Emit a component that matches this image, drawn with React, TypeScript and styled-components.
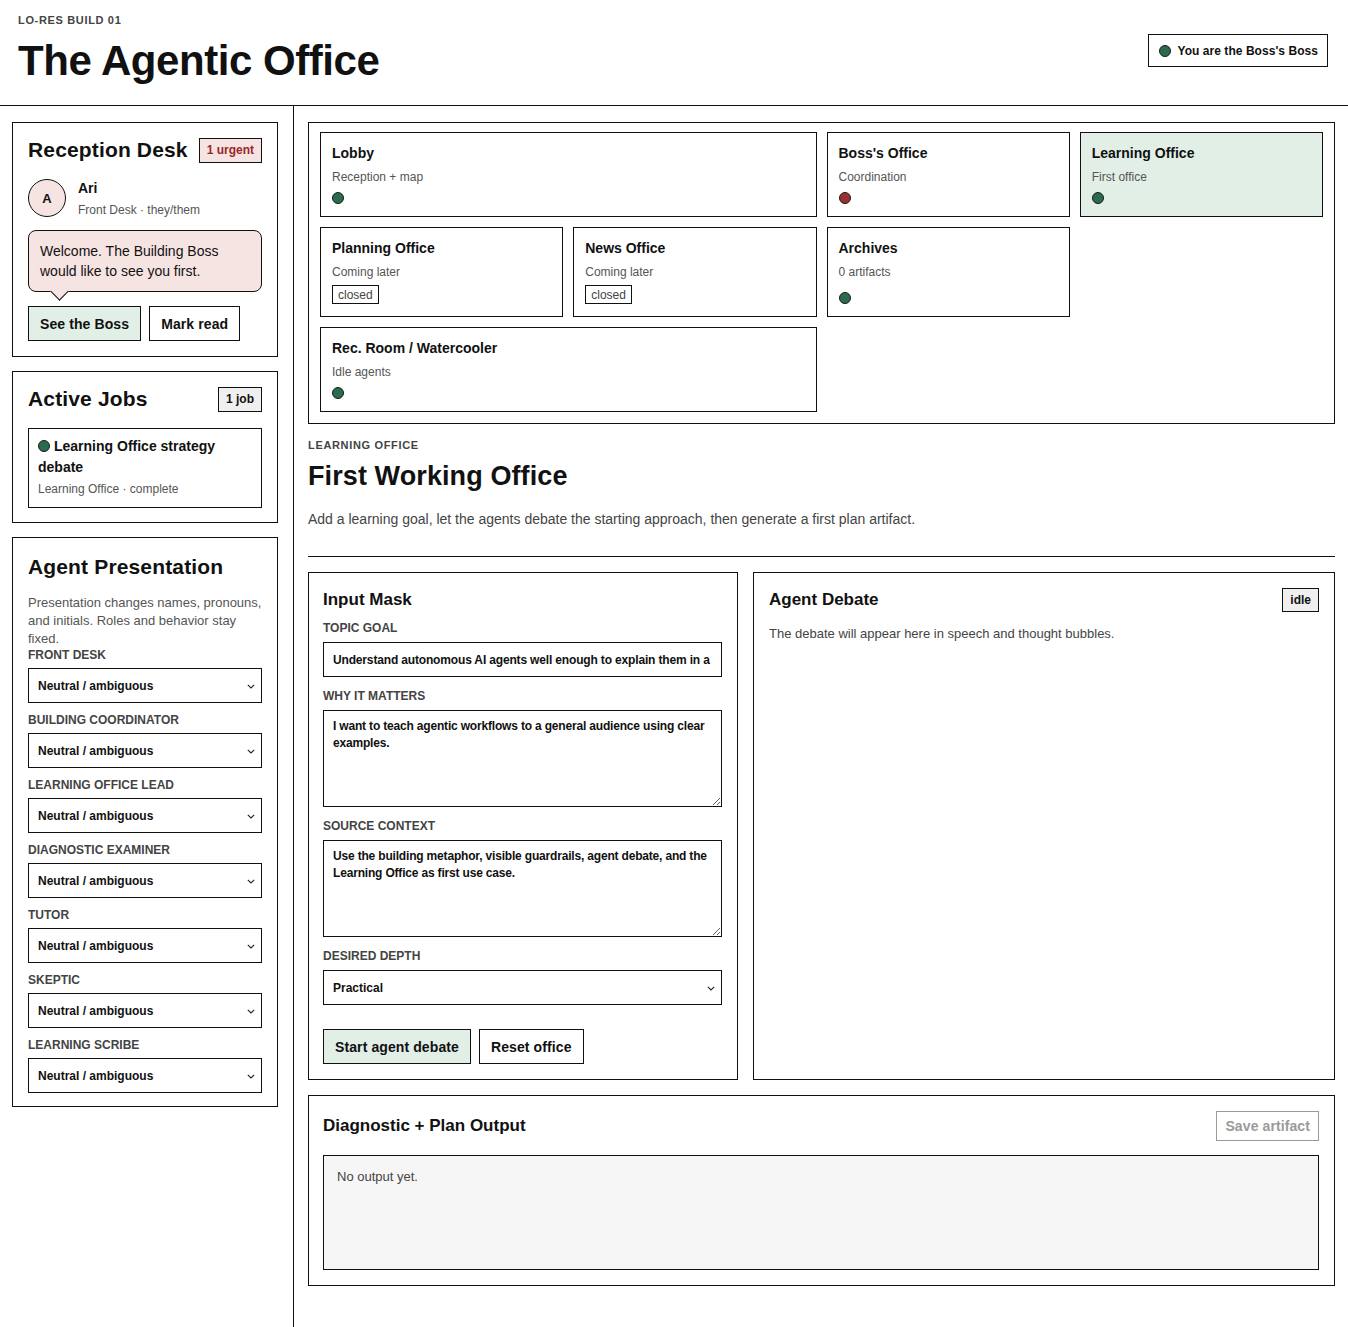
import styled, { createGlobalStyle } from 'styled-components';

import type { FunctionComponent } from 'react';

type Status = 'ok' | 'alert' | 'closed';

type RoomProps = Readonly<{
  title: string;
  sub: string;
  status: Status;
  span?: number;
  active?: boolean;
}>;

const ink = '#111';
const green = '#2b6b4f';
const red = '#9c3030';
const mint = '#e1efe7';
const blush = '#f6e4e3';

const GlobalStyle = createGlobalStyle`
  * { box-sizing: border-box; }

  body {
    margin: 0;
    background: #fff;
    color: ${ink};
    font-family: "Liberation Sans", Arial, Helvetica, sans-serif;
  }

  button, input, select, textarea {
    font-family: inherit;
    color: ${ink};
  }
`;

const Page = styled.div`
  min-height: 100vh;
  display: flex;
  flex-direction: column;
`;

const Header = styled.header`
  display: flex;
  align-items: center;
  justify-content: space-between;
  padding: 14px 20px 20px 18px;
  border-bottom: 1px solid ${ink};
`;

const Kicker = styled.div`
  font-size: 11px;
  line-height: 13px;
  font-weight: 700;
  letter-spacing: 0.06em;
  color: #444;
  text-transform: uppercase;
`;

const AppTitle = styled.h1`
  margin: 10px 0 0;
  font-size: 42px;
  line-height: 48px;
  letter-spacing: -0.45px;
  font-weight: 700;
`;

const RoleBadge = styled.div`
  display: flex;
  align-items: center;
  gap: 7px;
  height: 33px;
  margin-top: 2px;
  padding: 0 9px 0 10px;
  border: 1px solid ${ink};
  font-size: 12px;
  font-weight: 700;
  letter-spacing: 0.05px;
`;

const Dot = styled.span<{ $tone: 'ok' | 'alert' }>`
  display: inline-block;
  flex: none;
  width: 12px;
  height: 12px;
  border-radius: 50%;
  border: 1px solid #1a1a1a;
  background: ${({ $tone }) => ($tone === 'ok' ? green : red)};
`;

const Body = styled.div`
  flex: 1;
  display: grid;
  grid-template-columns: 294px 1fr;
`;

const Sidebar = styled.aside`
  display: flex;
  flex-direction: column;
  gap: 14px;
  padding: 16px 15px 20px 12px;
  border-right: 1px solid ${ink};
`;

const Panel = styled.section<{ $bottom?: number }>`
  border: 1px solid ${ink};
  padding: 14px 15px ${({ $bottom }) => $bottom ?? 15}px;
`;

const PanelHead = styled.div<{ $gap?: number; $top?: number }>`
  display: flex;
  align-items: center;
  justify-content: space-between;
  min-height: 26px;
  margin-top: ${({ $top }) => $top ?? 0}px;
  margin-bottom: ${({ $gap }) => $gap ?? 16}px;
`;

const PanelTitle = styled.h2`
  margin: 0;
  font-size: 21px;
  line-height: 26px;
  letter-spacing: 0.15px;
  font-weight: 700;
`;

const Tag = styled.span<{ $tone?: 'urgent' | 'plain' }>`
  display: inline-flex;
  align-items: center;
  height: 25px;
  padding: 0 7px;
  border: 1px solid ${ink};
  font-size: 12px;
  font-weight: 700;
  background: ${({ $tone }) => ($tone === 'urgent' ? blush : '#efefef')};
  color: ${({ $tone }) => ($tone === 'urgent' ? '#9a2727' : ink)};
`;

const AgentRow = styled.div`
  display: flex;
  gap: 12px;
  align-items: flex-start;
`;

const Avatar = styled.div`
  width: 38px;
  height: 38px;
  border-radius: 50%;
  border: 1px solid ${ink};
  background: ${blush};
  display: flex;
  align-items: center;
  justify-content: center;
  font-size: 13px;
  font-weight: 700;
`;

const AgentText = styled.div`
  padding-top: 1px;
`;

const AgentName = styled.div`
  font-size: 14px;
  line-height: 17px;
  font-weight: 700;
`;

const Meta = styled.div`
  font-size: 12px;
  line-height: 15px;
  color: #555;
`;

const AgentMeta = styled(Meta)`
  margin-top: 6px;
`;

const Bubble = styled.div`
  position: relative;
  margin-top: 12px;
  padding: 10px 11px;
  border: 1px solid ${ink};
  border-radius: 8px;
  background: ${blush};
  font-size: 14px;
  line-height: 20px;

  &::after {
    content: '';
    position: absolute;
    left: 24px;
    bottom: -7px;
    width: 12px;
    height: 12px;
    background: ${blush};
    border-right: 1px solid ${ink};
    border-bottom: 1px solid ${ink};
    transform: rotate(45deg);
  }
`;

const ButtonRow = styled.div<{ $top: number }>`
  display: flex;
  gap: 8px;
  margin-top: ${({ $top }) => $top}px;
`;

const Button = styled.button<{ $primary?: boolean }>`
  height: 35px;
  padding: 0 11px;
  border: 1px solid ${({ disabled }) => (disabled ? '#9a9a9a' : ink)};
  border-radius: 0;
  background: ${({ $primary }) => ($primary ? mint : '#fff')};
  color: ${({ disabled }) => (disabled ? '#9a9a9a' : ink)};
  font-size: 14px;
  font-weight: 700;
  letter-spacing: 0.1px;
  cursor: pointer;
`;

const SmallButton = styled(Button)`
  height: 30px;
  padding: 0 8px;
`;

const JobCard = styled.div`
  border: 1px solid ${ink};
  padding: 7px 9px 10px;
`;

const JobTitle = styled.div`
  font-size: 14px;
  line-height: 21px;
  font-weight: 700;

  ${Dot} {
    vertical-align: -1px;
    margin-right: 4px;
  }
`;

const JobMeta = styled(Meta)`
  margin-top: 4px;
`;

const Blurb = styled.p`
  margin: 0;
  font-size: 13px;
  line-height: 18px;
  color: #555;
`;

const FieldLabel = styled.div`
  font-size: 12px;
  line-height: 14px;
  font-weight: 700;
  color: #444;
  text-transform: uppercase;
`;

const SideField = styled.div`
  display: flex;
  flex-direction: column;
  gap: 6px;
  & + & {
    margin-top: 10px;
  }
`;

const SelectWrap = styled.div`
  position: relative;
`;

const Select = styled.select`
  width: 100%;
  height: 35px;
  padding: 0 26px 0 9px;
  border: 1px solid ${ink};
  border-radius: 0;
  background: #fff;
  appearance: none;
  font-size: 12px;
  font-weight: 700;
`;

const Chevron = styled.svg`
  position: absolute;
  right: 7px;
  top: 50%;
  width: 8px;
  height: 5px;
  margin-top: -2px;
  pointer-events: none;
`;

const Main = styled.main`
  display: flex;
  flex-direction: column;
  gap: 15px;
  padding: 16px 13px 40px 14px;
`;

const MapCard = styled.section`
  border: 1px solid ${ink};
  padding: 9px 11px 11px;
`;

const RoomGrid = styled.div`
  display: grid;
  grid-template-columns: repeat(4, 1fr);
  gap: 10px;
`;

const RoomBox = styled.div<{ $span: number; $active: boolean }>`
  grid-column: span ${({ $span }) => $span};
  display: flex;
  flex-direction: column;
  padding: 12px 11px 12px;
  border: 1px solid ${ink};
  background: ${({ $active }) => ($active ? mint : '#fff')};
`;

const RoomTitle = styled.div`
  font-size: 14px;
  line-height: 17px;
  font-weight: 700;
`;

const RoomSub = styled.div`
  margin-top: 8px;
  font-size: 12px;
  line-height: 14px;
  color: #555;
`;

const RoomStatus = styled.div`
  display: flex;
  margin-top: auto;
  padding-top: 8px;
`;

const ClosedTag = styled.span`
  display: inline-flex;
  align-items: center;
  height: 19px;
  margin-top: -2px;
  padding: 0 5px;
  border: 1px solid ${ink};
  font-size: 12px;
  color: #444;
`;

const Intro = styled.div`
  padding-bottom: 27px;
  border-bottom: 1px solid ${ink};
`;

const OfficeTitle = styled.h2`
  margin: 8px 0 0;
  font-size: 27px;
  line-height: 32px;
  letter-spacing: 0.1px;
  font-weight: 700;
`;

const Lead = styled.p`
  margin: 17px 0 0;
  font-size: 14px;
  line-height: 20px;
  color: #444;
`;

const Workspace = styled.div`
  display: grid;
  grid-template-columns: 430px 1fr;
  gap: 15px;
`;

const Card = styled.section`
  border: 1px solid ${ink};
  padding: 15px 15px 15px 14px;
`;

const CardHead = styled.div`
  display: flex;
  align-items: center;
  justify-content: space-between;
  min-height: 24px;
`;

const CardTitle = styled.h3`
  margin: 0;
  font-size: 17px;
  line-height: 24px;
  font-weight: 700;
`;

const Form = styled.div`
  display: flex;
  flex-direction: column;
  gap: 12px;
  margin-top: 9px;
`;

const Field = styled.label`
  display: flex;
  flex-direction: column;
  gap: 7px;
`;

const TextInput = styled.input`
  height: 35px;
  padding: 0 9px;
  border: 1px solid ${ink};
  border-radius: 0;
  font-size: 12px;
  font-weight: 700;
  letter-spacing: -0.16px;
  outline: none;
`;

const TextArea = styled.textarea`
  height: 97px;
  padding: 7px 9px;
  border: 1px solid ${ink};
  border-radius: 0;
  font-size: 12px;
  line-height: 16.5px;
  font-weight: 700;
  letter-spacing: -0.18px;
  resize: vertical;
  outline: none;
`;

const DebateCard = styled(Card)`
  padding-left: 15px;
`;

const DebateNote = styled.p`
  margin: 14px 0 0;
  font-size: 13px;
  line-height: 16px;
  color: #444;
`;

const IdleTag = styled(Tag)`
  height: 24px;
`;

const OutputHead = styled(CardHead)`
  min-height: 30px;
`;

const OutputBox = styled.div`
  margin-top: 14px;
  min-height: 115px;
  padding: 13px 13px 12px;
  border: 1px solid ${ink};
  background: #f6f6f6;
  font-size: 13px;
  line-height: 16px;
  color: #444;
`;

const rooms: RoomProps[] = [
  { title: 'Lobby', sub: 'Reception + map', status: 'ok', span: 2 },
  { title: "Boss's Office", sub: 'Coordination', status: 'alert' },
  { title: 'Learning Office', sub: 'First office', status: 'ok', active: true },
  { title: 'Planning Office', sub: 'Coming later', status: 'closed' },
  { title: 'News Office', sub: 'Coming later', status: 'closed' },
  { title: 'Archives', sub: '0 artifacts', status: 'ok' },
  { title: 'Rec. Room / Watercooler', sub: 'Idle agents', status: 'ok', span: 2 }
];

const roles = [
  'Front Desk',
  'Building Coordinator',
  'Learning Office Lead',
  'Diagnostic Examiner',
  'Tutor',
  'Skeptic',
  'Learning Scribe'
];

const presentations = ['Neutral / ambiguous', 'Feminine', 'Masculine'];

const Dropdown: FunctionComponent<{ options: string[]; value: string }> = ({ options, value }) => (
  <SelectWrap>
    <Select defaultValue={value}>
      {options.map((option) => (
        <option key={option}>{option}</option>
      ))}
    </Select>
    <Chevron viewBox="0 0 8 5" fill="none">
      <polyline points="0.8,0.8 4,4 7.2,0.8" stroke="#222" strokeWidth="1.1" />
    </Chevron>
  </SelectWrap>
);

const Room: FunctionComponent<RoomProps> = ({ title, sub, status, span = 1, active = false }) => (
  <RoomBox $span={span} $active={active}>
    <RoomTitle>{title}</RoomTitle>
    <RoomSub>{sub}</RoomSub>
    <RoomStatus>
      {status === 'closed' ? <ClosedTag>closed</ClosedTag> : <Dot $tone={status} />}
    </RoomStatus>
  </RoomBox>
);

const App: FunctionComponent = () => (
  <Page>
    <GlobalStyle />
    <Header>
      <div>
        <Kicker>Lo-res build 01</Kicker>
        <AppTitle>The Agentic Office</AppTitle>
      </div>
      <RoleBadge>
        <Dot $tone="ok" />
        You are the Boss's Boss
      </RoleBadge>
    </Header>

    <Body>
      <Sidebar>
        <Panel>
          <PanelHead>
            <PanelTitle>Reception Desk</PanelTitle>
            <Tag $tone="urgent">1 urgent</Tag>
          </PanelHead>
          <AgentRow>
            <Avatar>A</Avatar>
            <AgentText>
              <AgentName>Ari</AgentName>
              <AgentMeta>Front Desk · they/them</AgentMeta>
            </AgentText>
          </AgentRow>
          <Bubble>Welcome. The Building Boss would like to see you first.</Bubble>
          <ButtonRow $top={14}>
            <Button $primary>See the Boss</Button>
            <Button>Mark read</Button>
          </ButtonRow>
        </Panel>

        <Panel $bottom={14}>
          <PanelHead>
            <PanelTitle>Active Jobs</PanelTitle>
            <Tag>1 job</Tag>
          </PanelHead>
          <JobCard>
            <JobTitle>
              <Dot $tone="ok" />
              Learning Office strategy debate
            </JobTitle>
            <JobMeta>Learning Office · complete</JobMeta>
          </JobCard>
        </Panel>

        <Panel $bottom={13}>
          <PanelHead $top={2} $gap={14}>
            <PanelTitle>Agent Presentation</PanelTitle>
          </PanelHead>
          <Blurb>Presentation changes names, pronouns, and initials. Roles and behavior stay fixed.</Blurb>
          {roles.map((role) => (
            <SideField key={role}>
              <FieldLabel>{role}</FieldLabel>
              <Dropdown options={presentations} value="Neutral / ambiguous" />
            </SideField>
          ))}
        </Panel>
      </Sidebar>

      <Main>
        <MapCard>
          <RoomGrid>
            {rooms.map((room) => (
              <Room key={room.title} {...room} />
            ))}
          </RoomGrid>
        </MapCard>

        <Intro>
          <Kicker>Learning Office</Kicker>
          <OfficeTitle>First Working Office</OfficeTitle>
          <Lead>
            Add a learning goal, let the agents debate the starting approach, then generate a first plan artifact.
          </Lead>
        </Intro>

        <Workspace>
          <Card>
            <CardTitle>Input Mask</CardTitle>
            <Form>
              <Field>
                <FieldLabel>Topic goal</FieldLabel>
                <TextInput defaultValue="Understand autonomous AI agents well enough to explain them in a workshop." />
              </Field>
              <Field>
                <FieldLabel>Why it matters</FieldLabel>
                <TextArea defaultValue="I want to teach agentic workflows to a general audience using clear examples." />
              </Field>
              <Field>
                <FieldLabel>Source context</FieldLabel>
                <TextArea defaultValue="Use the building metaphor, visible guardrails, agent debate, and the Learning Office as first use case." />
              </Field>
              <Field>
                <FieldLabel>Desired depth</FieldLabel>
                <Dropdown options={['Overview', 'Practical', 'Deep dive']} value="Practical" />
              </Field>
            </Form>
            <ButtonRow $top={24}>
              <Button $primary>Start agent debate</Button>
              <Button>Reset office</Button>
            </ButtonRow>
          </Card>

          <DebateCard>
            <CardHead>
              <CardTitle>Agent Debate</CardTitle>
              <IdleTag>idle</IdleTag>
            </CardHead>
            <DebateNote>The debate will appear here in speech and thought bubbles.</DebateNote>
          </DebateCard>
        </Workspace>

        <Card>
          <OutputHead>
            <CardTitle>Diagnostic + Plan Output</CardTitle>
            <SmallButton disabled>Save artifact</SmallButton>
          </OutputHead>
          <OutputBox>No output yet.</OutputBox>
        </Card>
      </Main>
    </Body>
  </Page>
);

export default App;
